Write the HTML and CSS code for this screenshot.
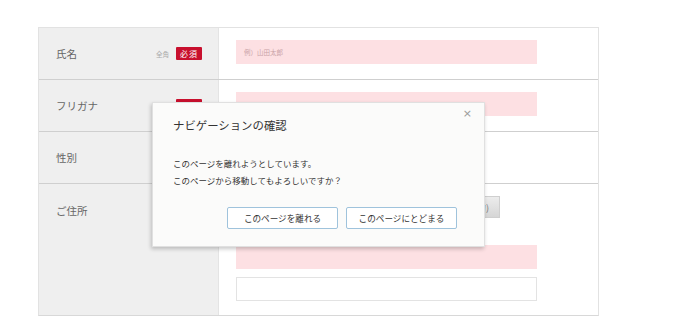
FILE: index.html
```html
<!DOCTYPE html>
<html lang="ja">

<head>
    <meta charset="UTF-8">
    <title>お申し込みフォーム</title>
    <link rel="stylesheet" href="styles.css">
</head>

<body>
    <div class="page">
        <div class="form">
            <div class="row">
                <div class="label">
                    <span class="name">氏名</span>
                    <span class="tags"><span class="zen">全角</span><span class="req">必須</span></span>
                </div>
                <div class="field">
                    <div class="input pink"><span class="ph">例）山田太郎</span></div>
                </div>
            </div>
            <div class="row">
                <div class="label">
                    <span class="name">フリガナ</span>
                    <span class="tags"><span class="zen">全角</span><span class="req">必須</span></span>
                </div>
                <div class="field">
                    <div class="input pink"></div>
                </div>
            </div>
            <div class="row">
                <div class="label">
                    <span class="name">性別</span>
                </div>
                <div class="field"></div>
            </div>
            <div class="row address">
                <div class="label top">
                    <span class="name">ご住所</span>
                </div>
                <div class="field stack">
                    <div class="zip">
                        <div class="input pink short"></div>
                        <div class="search">住所を自動入力)</div>
                    </div>
                    <div class="input pink"></div>
                    <div class="input plain"></div>
                </div>
            </div>
        </div>

        <!-- confirm dialog -->
        <div class="dialog">
            <span class="close">×</span>
            <div class="title">ナビゲーションの確認</div>
            <p class="msg">このページを離れようとしています。</p>
            <p class="msg">このページから移動してもよろしいですか？</p>
            <div class="actions">
                <button class="btn">このページを離れる</button>
                <button class="btn">このページにとどまる</button>
            </div>
        </div>
    </div>
</body>

</html>
```

FILE: styles.css
```css
body {
    margin: 0;
    background: #fff;
    font-family: "Noto Sans CJK JP", "Noto Sans", sans-serif;
    color: #555;
}

.page {
    position: relative;
    width: 700px;
    height: 330px;
    padding: 27px 0 0 38px;
    box-sizing: border-box;
}

.form {
    width: 561px;
    border: 1px solid #e2e2e2;
    border-bottom-color: #d8d8d8;
    box-sizing: border-box;
}

.row {
    display: grid;
    grid-template-columns: 180px 1fr;
    border-bottom: 1px solid #cfcfcf;
}

.row:last-child {
    border-bottom: none;
}

.label {
    background: #efefef;
    border-right: 1px solid #e4e4e4;
    display: flex;
    align-items: center;
    justify-content: space-between;
    padding: 0 16px 0 17px;
    height: 51px;
}

.label.top {
    align-items: flex-start;
    padding-top: 19px;
    height: auto;
    box-sizing: border-box;
}

.name {
    font-size: 10.5px;
    color: #666;
}

.tags {
    display: flex;
    align-items: center;
    gap: 7px;
}

.zen {
    font-size: 6.5px;
    color: #aaa;
}

.req {
    background: #c8102e;
    color: #fff;
    font-size: 8px;
    line-height: 13px;
    padding: 0 4px;
    border-radius: 1px;
    letter-spacing: 1px;
}

.field {
    padding: 12px 0 0 17px;
}

.field.stack {
    display: flex;
    flex-direction: column;
    gap: 8px;
    padding: 12px 0 14px 17px;
}

.input {
    width: 301px;
    height: 24px;
    box-sizing: border-box;
    display: flex;
    align-items: center;
    padding-left: 8px;
}

.pink {
    background: #fde0e3;
}

.plain {
    background: #fff;
    border: 1px solid #e3e3e3;
}

.ph {
    font-size: 6.5px;
    color: #c9a3a7;
}

.zip {
    display: flex;
    gap: 6px;
    margin-bottom: 19px;
}

.input.short {
    width: 120px;
    height: 22px;
}

.search {
    height: 22px;
    box-sizing: border-box;
    width: 138px;
    background: linear-gradient(#ececec, #d6d6d6);
    border: 1px solid #cfcfcf;
    font-size: 9px;
    color: #777;
    display: flex;
    align-items: center;
    justify-content: flex-end;
    padding-right: 10px;
}

/* dialog */
.dialog {
    position: absolute;
    left: 152px;
    top: 102px;
    width: 333px;
    height: 145px;
    box-sizing: border-box;
    background: #fbfbfa;
    border: 1px solid #e0e0e0;
    box-shadow: -1px 2px 4px rgba(0, 0, 0, 0.22);
    padding: 13px 0 0 20px;
}

.close {
    position: absolute;
    right: 12px;
    top: 4px;
    font-size: 11px;
    color: #9a9a9a;
    font-family: "DejaVu Sans", sans-serif;
}

.title {
    font-size: 11.4px;
    color: #333;
    line-height: 18px;
}

.msg {
    margin: 0;
    font-size: 8.5px;
    color: #333;
    line-height: 17px;
}

.msg:first-of-type {
    margin-top: 21px;
}

.actions {
    display: flex;
    justify-content: flex-end;
    gap: 8px;
    margin: 18px 27px 0 0;
}

.btn {
    font-family: "Noto Sans CJK JP", sans-serif;
    background: #fff;
    border: 1px solid #9fc3dc;
    border-radius: 2px;
    height: 22px;
    padding: 0;
    font-size: 8.6px;
    color: #333;
    width: 111px;
}
```
